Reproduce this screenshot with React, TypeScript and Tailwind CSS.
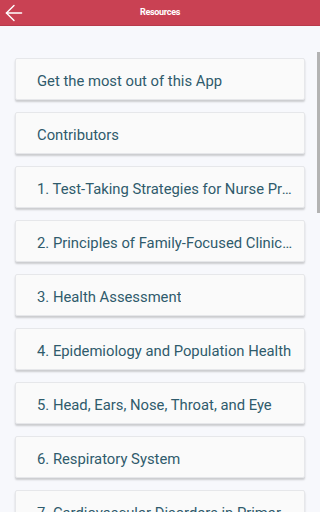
import { ArrowLeft } from "lucide-react";

const items = [
  "Get the most out of this App",
  "Contributors",
  "1. Test-Taking Strategies for Nurse Practitioners",
  "2. Principles of Family-Focused Clinical Practice",
  "3. Health Assessment",
  "4. Epidemiology and Population Health",
  "5. Head, Ears, Nose, Throat, and Eye",
  "6. Respiratory System",
  "7. Cardiovascular Disorders in Primary Care",
  "8. Gastrointestinal Disorders",
];

export default function App() {
  return (
    <div className="h-[512px] w-[320px] overflow-hidden bg-[#f7f8fc] font-['Roboto',sans-serif] relative">
      {/* header */}
      <div className="flex h-[26px] items-center bg-[#c94153] border-b border-[#b83a4b] relative">
        <ArrowLeft size={26} strokeWidth={1.3} className="ml-[1px] text-white" />
        <span className="absolute left-0 right-0 text-center text-[9px] font-bold tracking-[-0.3px] text-white">
          Resources
        </span>
      </div>

      {/* list */}
      <div className="flex flex-col gap-3 px-[15px] pt-[32px]">
        {items.map((t) => (
          <div
            key={t}
            className="flex h-[42px] shrink-0 items-center rounded-[2px] border border-[#e6e7ea] bg-[#fafafa] pl-[21px] pr-[10px] pt-[4px] shadow-[0_2px_2px_rgba(0,0,0,0.18)]"
          >
            <span className="truncate text-[14.8px] text-[#2f5b6c]">{t}</span>
          </div>
        ))}
      </div>

      {/* scrollbar */}
      <div className="absolute right-0 top-[52px] h-[161px] w-[3px] bg-[#b3b3b3]" />
    </div>
  );
}
